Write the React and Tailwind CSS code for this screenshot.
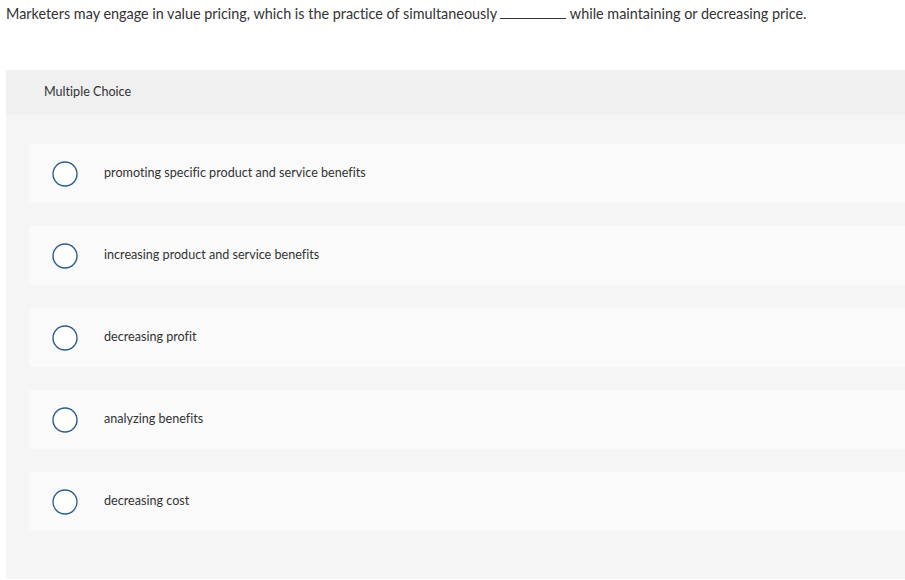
const options = [
  'promoting specific product and service benefits',
  'increasing product and service benefits',
  'decreasing profit',
  'analyzing benefits',
  'decreasing cost',
]

function Radio() {
  return (
    <svg width="26" height="26" viewBox="0 0 26 26" className="shrink-0">
      <circle cx="13" cy="13" r="12" fill="#fff" stroke="#2c5d91" strokeWidth="1.4" />
    </svg>
  )
}

export default function App() {
  return (
    <div className="min-h-[580px] w-[905px] overflow-hidden bg-white font-['Lato',sans-serif] text-[#333] [font-variant-ligatures:none]">
      <p className="px-[6px] pt-[5px] text-[14.4px] leading-[18px] text-[#333]">
        Marketers may engage in value pricing, which is the practice of simultaneously{' '}
        <span className="inline-block w-[66px] border-b border-[#333] align-baseline"></span>{' '}
        while maintaining or decreasing price.
      </p>

      <div className="ml-[6px] mt-[47px] w-[920px] rounded-b-[3px] bg-[#f5f5f5] pb-[48px]">
        <div className="flex h-[45px] items-center bg-[#f0f0f0] pl-[38px] text-[12.6px] text-[#333]">
          Multiple Choice
        </div>
        <div className="flex flex-col gap-[23px] pl-[23px] pt-[29px]">
          {options.map((opt) => (
            <div
              key={opt}
              className="flex h-[59px] items-center rounded-l-[3px] bg-[#fafafa] pl-[23px]"
            >
              <Radio />
              <span className="ml-[26px] text-[12.6px] text-[#333]">{opt}</span>
            </div>
          ))}
        </div>
      </div>
    </div>
  )
}
